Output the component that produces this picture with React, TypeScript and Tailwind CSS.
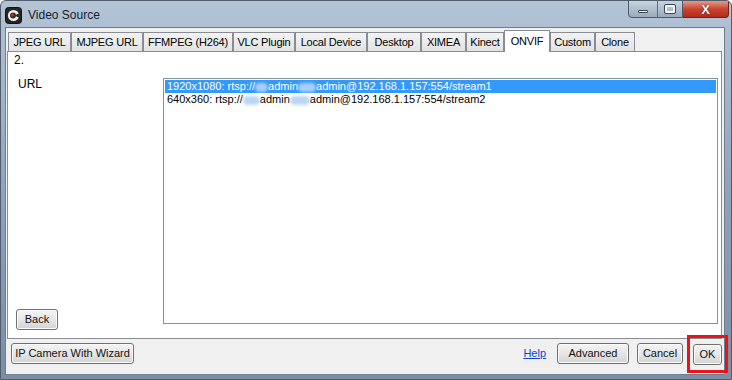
import React from 'react'

const tabs = [
    { label: 'JPEG URL', w: 'w-[63px]' },
    { label: 'MJPEG URL', w: 'w-[72px]' },
    { label: 'FFMPEG (H264)', w: 'w-[90px]' },
    { label: 'VLC Plugin', w: 'w-[62px]' },
    { label: 'Local Device', w: 'w-[72px]' },
    { label: 'Desktop', w: 'w-[54px]' },
    { label: 'XIMEA', w: 'w-[45px]' },
    { label: 'Kinect', w: 'w-[38px]' },
    { label: 'ONVIF', w: 'w-[46px]', active: true },
    { label: 'Custom', w: 'w-[45px]' },
    { label: 'Clone', w: 'w-[40px]' },
]

function Blob({ w, light }: { w: string; light?: boolean }) {
    return (
        <span
            className={`inline-block h-[9px] rounded-full align-middle blur-[1.5px] ${w} ${light ? 'bg-[#a9d0fb]' : 'bg-[#b9d7f3]'}`}
        />
    )
}

function WinButton({ children, className = '' }: { children: React.ReactNode; className?: string }) {
    return (
        <button
            className={`flex h-[21px] items-center justify-center rounded-[3px] border border-[#707070] bg-gradient-to-b from-[#f4f4f4] via-[#e6e6e6] to-[#d3d3d3] text-[11px] text-[#111] shadow-[inset_0_0_0_1px_#fbfbfb] ${className}`}
        >
            {children}
        </button>
    )
}

function AppIcon() {
    return (
        <svg width="17" height="17" viewBox="0 0 17 17">
            <rect x="0.5" y="0.5" width="16" height="16" rx="3" fill="#262626" stroke="#111" />
            <circle cx="8.5" cy="8.5" r="5.6" fill="#f2f2f2" />
            <path d="M13.6 6.2 A5.6 5.6 0 0 1 13.6 10.8 L10 8.5 Z" fill="#262626" />
            <circle cx="8" cy="8.5" r="3" fill="#3a2a24" />
            <circle cx="7.4" cy="8" r="1.4" fill="#c0392b" />
        </svg>
    )
}

export default function App() {
    return (
        <div
            className="flex h-[380px] w-[732px] flex-col overflow-hidden rounded-t-[6px] border border-[#4f5d6d] bg-gradient-to-b from-[#b3c4d6] via-[#8fa4ba] to-[#7a8ea4]"
            style={{ fontFamily: '"Liberation Sans", Arial, sans-serif' }}
        >
            {/* title bar */}
            <div className="flex h-[26px] shrink-0 items-start">
                <div className="flex items-center gap-[6px] pl-[4px] pt-[5px]">
                    <AppIcon />
                    <span className="text-[12px] text-[#15202c]">Video Source</span>
                </div>
                <div className="ml-auto mr-[2px] flex h-[18px] -mt-px">
                    <div className="flex overflow-hidden rounded-bl-[4px] border border-[#4d5b6b] bg-gradient-to-b from-[#c8d4e0] to-[#9aaabc]">
                        <div className="flex w-[29px] items-center justify-center border-r border-[#5f6e7f]">
                            <span className="mt-[5px] h-[3px] w-[10px] rounded-[1px] border border-[#3a4654] bg-white" />
                        </div>
                        <div className="flex w-[24px] items-center justify-center">
                            <span className="h-[8px] w-[10px] rounded-[1px] border-[2px] border-[#f4f6f8] outline outline-1 outline-[#3a4654]" />
                        </div>
                    </div>
                    <div className="flex w-[46px] items-center justify-center rounded-br-[4px] border border-l-0 border-[#5a2a24] bg-gradient-to-b from-[#e49a8a] via-[#c9432f] to-[#b32a1a]">
                        <span
                            className="text-[13px] font-bold leading-none text-white"
                            style={{ textShadow: '0 0 1px #3a1410, 0 0 1px #3a1410' }}
                        >
                            X
                        </span>
                    </div>
                </div>
            </div>

            {/* client area */}
            <div className="mx-[4px] mb-[4px] mr-[6px] flex flex-1 flex-col border border-[#6d7e90] bg-[#f0f0f0] px-[1px] text-black">
                {/* tabs */}
                <div className="mt-[2px] flex h-[21px] items-end pl-px">
                    {tabs.map((t) =>
                        t.active ? (
                            <div
                                key={t.label}
                                className={`relative z-10 -mb-px flex h-[22px] items-start justify-center border border-b-0 border-[#898c95] bg-white pt-[2px] text-[11px] tracking-[-0.2px] ${t.w}`}
                            >
                                {t.label}
                            </div>
                        ) : (
                            <div
                                key={t.label}
                                className={`flex h-[19px] items-center justify-center border border-b-0 border-[#898c95] bg-gradient-to-b from-[#f3f3f3] to-[#e3e3e3] text-[11px] tracking-[-0.2px] ${t.w}`}
                            >
                                {t.label}
                            </div>
                        ),
                    )}
                </div>

                {/* tab panel */}
                <div className="mr-[1px] flex h-[288px] border border-[#898c95] bg-white">
                    <div className="flex w-[155px] flex-col pb-[8px] text-[12px]">
                        <span className="ml-[6px] mt-[1px] leading-[14px]">2.</span>
                        <span className="ml-[10px] mt-[10px] leading-[14px]">URL</span>
                        <WinButton className="ml-[8px] mt-auto w-[42px]">Back</WinButton>
                    </div>
                    <div className="flex flex-1 pb-[14px] pr-[3px] pt-[26px]">
                        <div className="flex-1 border border-[#8a9099] bg-white p-px text-[11px] leading-[13px]">
                            <div className="whitespace-nowrap bg-[#3399ff] pl-[2px] text-white">
                                1920x1080: rtsp://
                                <Blob w="w-[13px]" light />
                                admin
                                <Blob w="w-[18px]" light />
                                admin@192.168.1.157:554/stream1
                            </div>
                            <div className="whitespace-nowrap pl-[2px] text-black">
                                640x360: rtsp://
                                <Blob w="w-[17px]" />
                                admin
                                <Blob w="w-[20px]" />
                                admin@192.168.1.157:554/stream2
                            </div>
                        </div>
                    </div>
                </div>

                {/* bottom buttons */}
                <div className="mt-[4px] flex h-[21px] items-center">
                    <WinButton className="ml-[4px] w-[123px]">IP Camera With Wizard</WinButton>
                    <a className="ml-auto text-[11px] text-[#0645d6] underline">Help</a>
                    <WinButton className="ml-[11px] w-[72px]">Advanced</WinButton>
                    <WinButton className="ml-[8px] w-[46px]">Cancel</WinButton>
                    <div className="relative z-10 -my-[9px] ml-[4px] mr-[-5px] border-[3px] border-[#e8141a] px-[3px] pb-[5px] pt-[6px]">
                        <WinButton className="w-[29px]">OK</WinButton>
                    </div>
                </div>
            </div>
        </div>
    )
}
